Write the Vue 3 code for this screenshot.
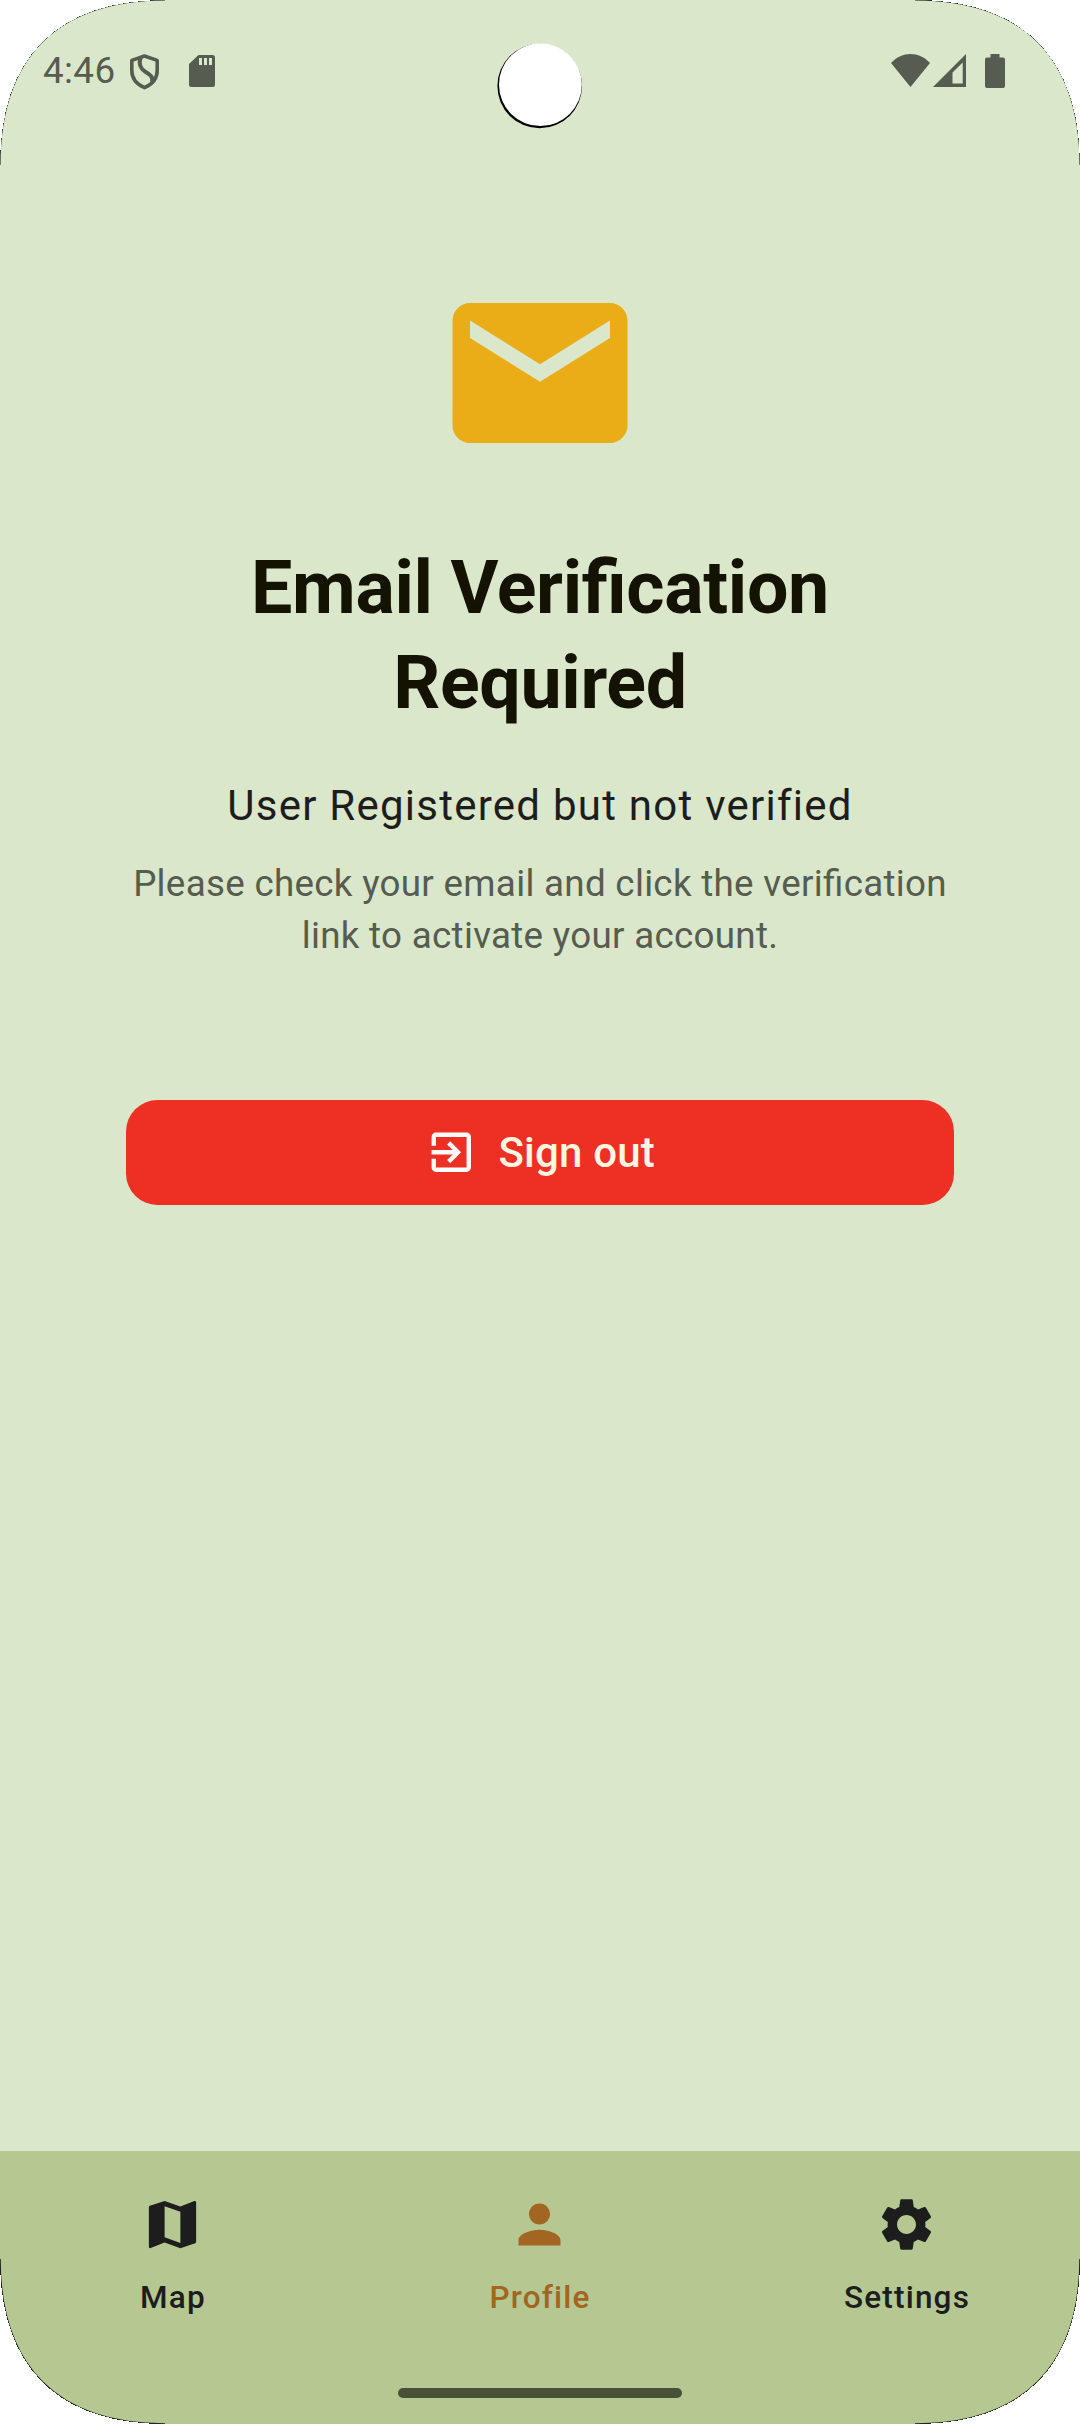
<script setup>
const tabs = [
  {
    label: 'Map',
    path: 'M20.5 3l-.16.03L15 5.1 9 3 3.36 4.9c-.21.07-.36.25-.36.48V20.5c0 .28.22.5.5.5l.16-.03L9 18.9l6 2.1 5.64-1.9c.21-.07.36-.25.36-.48V3.5c0-.28-.22-.5-.5-.5zM15 19l-6-2.11V5l6 2.11V19z',
  },
  {
    label: 'Profile',
    active: true,
    path: 'M12 12c2.21 0 4-1.79 4-4s-1.79-4-4-4-4 1.79-4 4 1.79 4 4 4zm0 2c-2.67 0-8 1.34-8 4v2h16v-2c0-2.66-5.33-4-8-4z',
  },
  {
    label: 'Settings',
    path: 'M19.14 12.94c.04-.3.06-.61.06-.94 0-.32-.02-.64-.07-.94l2.03-1.58c.18-.14.23-.41.12-.61l-1.92-3.32c-.12-.22-.37-.29-.59-.22l-2.39.96c-.5-.38-1.03-.7-1.62-.94l-.36-2.54c-.04-.24-.24-.41-.48-.41h-3.84c-.24 0-.43.17-.47.41l-.36 2.54c-.59.24-1.13.57-1.62.94l-2.39-.96c-.22-.08-.47 0-.59.22L2.74 8.87c-.12.21-.08.47.12.61l2.03 1.58c-.05.3-.09.63-.09.94s.02.64.07.94l-2.03 1.58c-.18.14-.23.41-.12.61l1.92 3.32c.12.22.37.29.59.22l2.39-.96c.5.38 1.03.7 1.62.94l.36 2.54c.05.24.24.41.48.41h3.84c.24 0 .44-.17.47-.41l.36-2.54c.59-.24 1.13-.56 1.62-.94l2.39.96c.22.08.47 0 .59-.22l1.92-3.32c.12-.22.07-.47-.12-.61l-2.01-1.58zM12 15.6c-1.98 0-3.6-1.62-3.6-3.6s1.62-3.6 3.6-3.6 3.6 1.62 3.6 3.6-1.62 3.6-3.6 3.6z',
  },
]
</script>

<template>
  <div class="phone">
    <header class="status">
      <div class="status-left">
        <span class="clock">4:46</span>
        <svg class="shield" width="31" height="36" viewBox="0 0 31 36" fill="none" stroke="currentColor" stroke-width="3.6">
          <path d="M15.5 2 28.2 6.400V16.500C28.200 24.500 23 30.400 15.500 33.600 8 30.400 2.800 24.500 2.800 16.500V6.400Z" stroke-linejoin="round" />
          <path d="M11.500 4C9.500 10 11.500 14.500 16 17.500C21 20.500 24.500 23 23 28" stroke-width="4" />
        </svg>
        <svg class="sd" width="26" height="32" viewBox="0 0 26 32">
          <path fill="currentColor" fill-rule="evenodd" d="M9.500 0H23.500Q26 0 26 2.500V29.500Q26 32 23.500 32H2.500Q0 32 0 29.500V9ZM10 3V10H13V3ZM15 3V10H18V3ZM20 3V10H23V3Z" />
        </svg>
      </div>
      <div class="status-right">
        <svg width="39" height="33" viewBox="0 0 39 33"><path fill="currentColor" d="M0 9C11-3 28-3 39 9L19.500 33Z" /></svg>
        <svg class="signal" width="33" height="33" viewBox="0 0 33 33"><path fill="currentColor" fill-rule="evenodd" d="M33 0V33H0ZM29.700 8.500 19.500 18.500V29.500H29.700Z" /></svg>
        <svg class="battery" width="20" height="34" viewBox="0 0 20 34"><path fill="currentColor" d="M5.500 0H14.500V3.500H18Q20 3.500 20 5.500V32Q20 34 18 34H2Q0 34 0 32V5.500Q0 3.500 2 3.500H5.500Z" /></svg>
      </div>
    </header>

    <main class="content">
      <svg class="mail" viewBox="0 0 24 24">
        <path fill="currentColor" d="M20 4H4c-1.100 0-1.990.9-1.990 2L2 18c0 1.100.9 2 2 2h16c1.100 0 2-.9 2-2V6c0-1.100-.9-2-2-2zm0 4l-8 5-8-5V6l8 5 8-5v2z" />
      </svg>
      <h1>Email Verification Required</h1>
      <p class="lead">User Registered but not verified</p>
      <p class="hint">Please check your email and click the verification link to activate your account.</p>
      <button class="sign-out" type="button">
        <svg viewBox="0 0 24 24">
          <path fill="#fff" d="M10.090 15.590L11.500 17l5-5-5-5-1.410 1.410L12.670 11H3v2h9.670l-2.580 2.590zM19 3H5c-1.110 0-2 .9-2 2v4h2V5h14v14H5v-4H3v4c0 1.100.890 2 2 2h14c1.100 0 2-.9 2-2V5c0-1.100-.9-2-2-2z" />
        </svg>
        <span>Sign out</span>
      </button>
    </main>

    <footer class="bottom">
      <nav>
        <a v-for="tab in tabs" :key="tab.label" class="tab" :class="{ active: tab.active }">
          <svg viewBox="0 0 24 24"><path fill="currentColor" :d="tab.path" /></svg>
          <span>{{ tab.label }}</span>
        </a>
      </nav>
      <div class="handle"></div>
    </footer>

    <!-- Display cutouts: camera hole and rounded screen corners -->
    <svg class="bezel" width="1080" height="2424" viewBox="0 0 1080 2424">
      <circle cx="539.7" cy="86" r="42.300" fill="#000" />
      <circle cx="540.4" cy="84.700" r="41.400" fill="#fff" />
      <g fill="none" stroke="#20231b">
        <path d="M0 165C0 57.500 57.500 0 165 0M915 0C1022.500 0 1080 57.500 1080 165" stroke-width="1" />
        <path d="M0 2259C0 2366.500 57.500 2424 165 2424M915 2424C1022.500 2424 1080 2366.500 1080 2259" stroke-width="1.500" />
      </g>
      <g fill="#fff" shape-rendering="crispEdges">
        <path d="M0 165C0 57.500 57.500 0 165 0H0Z" />
        <path d="M1080 165C1080 57.500 1022.500 0 915 0H1080Z" />
        <path d="M0 2259C0 2366.500 57.500 2424 165 2424H0Z" />
        <path d="M1080 2259C1080 2366.500 1022.500 2424 915 2424H1080Z" />
      </g>
    </svg>
  </div>
</template>

<style>
body {
  margin: 0;
}
</style>

<style scoped>
.phone {
  position: relative;
  display: flex;
  flex-direction: column;
  width: 1080px;
  height: 2424px;
  overflow: hidden;
  background: #dae7cb;
  font-family: Roboto, "Liberation Sans", sans-serif;
}

svg {
  display: block;
  flex: none;
}

.status {
  display: flex;
  justify-content: space-between;
  box-sizing: border-box;
  height: 142px;
  padding: 0 75px 0 43px;
  color: #565c4f;
}

.status-left,
.status-right {
  display: flex;
  align-items: flex-start;
  padding-top: 54px;
}

.clock {
  width: 86px;
  margin-top: -5px;
  font-size: 36.75px;
  line-height: 44px;
  letter-spacing: 0.4px;
}

.sd {
  margin: 1px 0 0 29px;
}

.signal {
  margin-left: 3px;
}

.battery {
  margin-left: 19px;
}

.content {
  display: flex;
  flex: 1;
  flex-direction: column;
  align-items: center;
  padding: 126px 126px 0;
  text-align: center;
}

.mail {
  width: 210px;
  height: 210px;
  color: #eaad17;
}

h1 {
  width: 700px;
  margin: 63px 0 43.5px;
  color: #141200;
  font-size: 73.5px;
  font-weight: 700;
  line-height: 94.5px;
  letter-spacing: -0.33px;
  font-feature-settings: "liga" 1;
}

p {
  margin: 0;
}

.lead {
  color: #1d1d1d;
  font-size: 42px;
  line-height: 63px;
  letter-spacing: 1.25px;
}

.hint {
  margin-top: 21px;
  color: #565c4f;
  font-size: 36.75px;
  line-height: 52.5px;
  letter-spacing: 0.3px;
  font-feature-settings: "liga" 1;
}

.sign-out {
  display: flex;
  align-items: center;
  justify-content: center;
  gap: 21px;
  width: 828px;
  height: 105px;
  margin: 137.5px 0 0;
  padding: 0;
  border: 0;
  border-radius: 31.5px;
  background: #ee2f24;
  color: #fff8e1;
  font: 500 42px/63px Roboto, "Liberation Sans", sans-serif;
  letter-spacing: 0.2px;
}

.sign-out svg {
  width: 52.5px;
  height: 52.5px;
}

.bottom {
  display: flex;
  flex-direction: column;
  align-items: center;
  height: 273px;
  background: #b5c891;
}

nav {
  display: flex;
  gap: 21px;
  width: 100%;
  height: 237px;
}

.tab {
  display: flex;
  flex: 1;
  flex-direction: column;
  align-items: center;
  padding-top: 42px;
  color: #1d1d1d;
  font-size: 31.5px;
  font-weight: 500;
  line-height: 42px;
  letter-spacing: 1.2px;
}

.tab svg {
  width: 63px;
  height: 63px;
  margin: 0 1px 21px 0;
}

.tab.active {
  color: #a26522;
}

.handle {
  width: 284px;
  height: 10px;
  border-radius: 5px;
  background: #495038;
}

.bezel {
  position: absolute;
  inset: 0;
}
</style>
